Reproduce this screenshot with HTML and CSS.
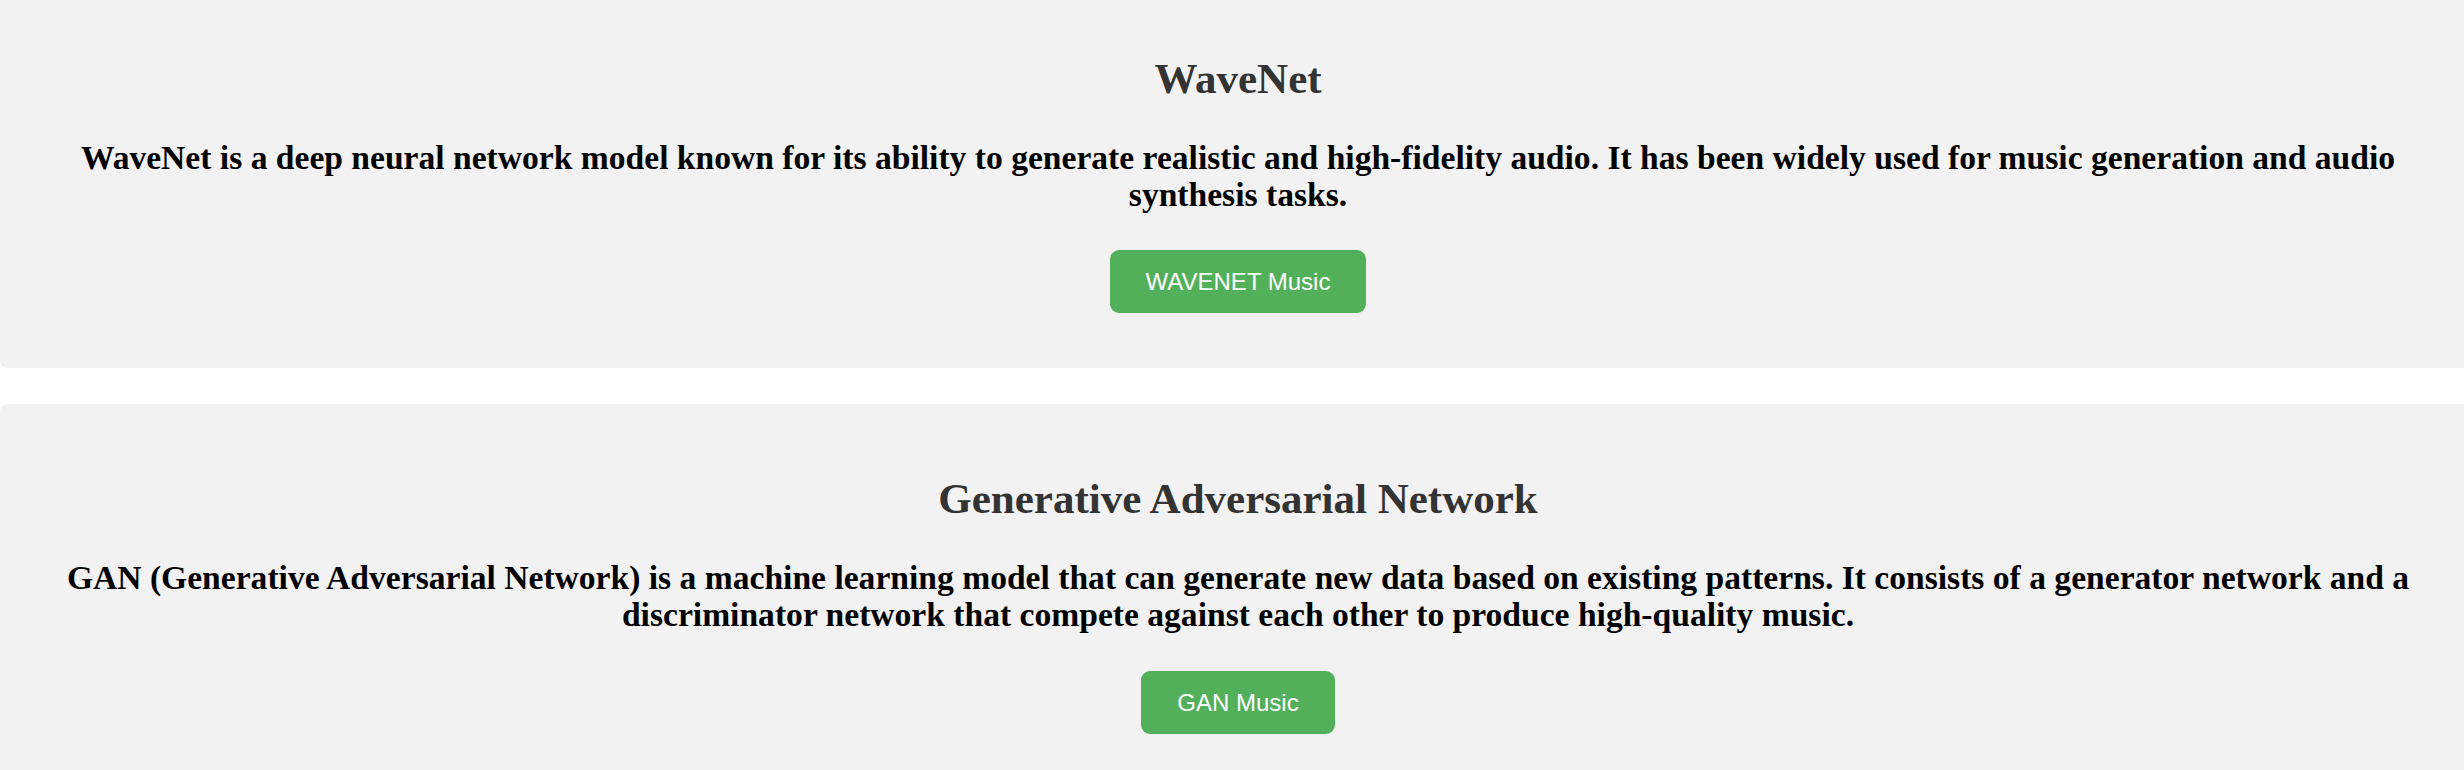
FILE: index.html
```html
<!DOCTYPE html>
<html lang="en">
<head>
<meta charset="utf-8">
<title>Music Models</title>
<link rel="stylesheet" href="styles.css">
</head>
<body>
<main class="page">
  <section class="card">
    <h2 class="card-title">WaveNet</h2>
    <p class="card-text">WaveNet is a deep neural network model known for its ability to generate realistic and high-fidelity audio. It has been widely used for music generation and audio synthesis tasks.</p>
    <a class="btn" href="#">WAVENET Music</a>
  </section>
  <section class="card">
    <h2 class="card-title">Generative Adversarial Network</h2>
    <p class="card-text">GAN (Generative Adversarial Network) is a machine learning model that can generate new data based on existing patterns. It consists of a generator network and a discriminator network that compete against each other to produce high-quality music.</p>
    <a class="btn" href="#">GAN Music</a>
  </section>
</main>
</body>
</html>
```
FILE: styles.css
```css
html, body {
  margin: 0;
  padding: 0;
  background: #ffffff;
  overflow-x: hidden;
}

body {
  font-family: "Liberation Serif", "Times New Roman", serif;
}

.page {
  display: flex;
  flex-direction: column;
  gap: 36px;
  margin-top: -16px;
  margin-right: -12px;
}

.card {
  background: #f2f2f2;
  border-radius: 8px;
  padding: 71px 30px 55px;
  text-align: center;
}

.card-title {
  margin: 0;
  font-size: 43px;
  line-height: 48px;
  font-weight: bold;
  color: #333333;
}

.card-text {
  margin: 37px 0 37px;
  font-size: 33.6px;
  line-height: 36.7px;
  font-weight: bold;
  color: #000000;
}

.btn {
  display: inline-block;
  padding: 18px 36px;
  border-radius: 9px;
  background: #52b05a;
  color: #ffffff;
  font-family: "Liberation Sans", Arial, sans-serif;
  font-size: 24px;
  line-height: 27px;
  text-decoration: none;
}
```
